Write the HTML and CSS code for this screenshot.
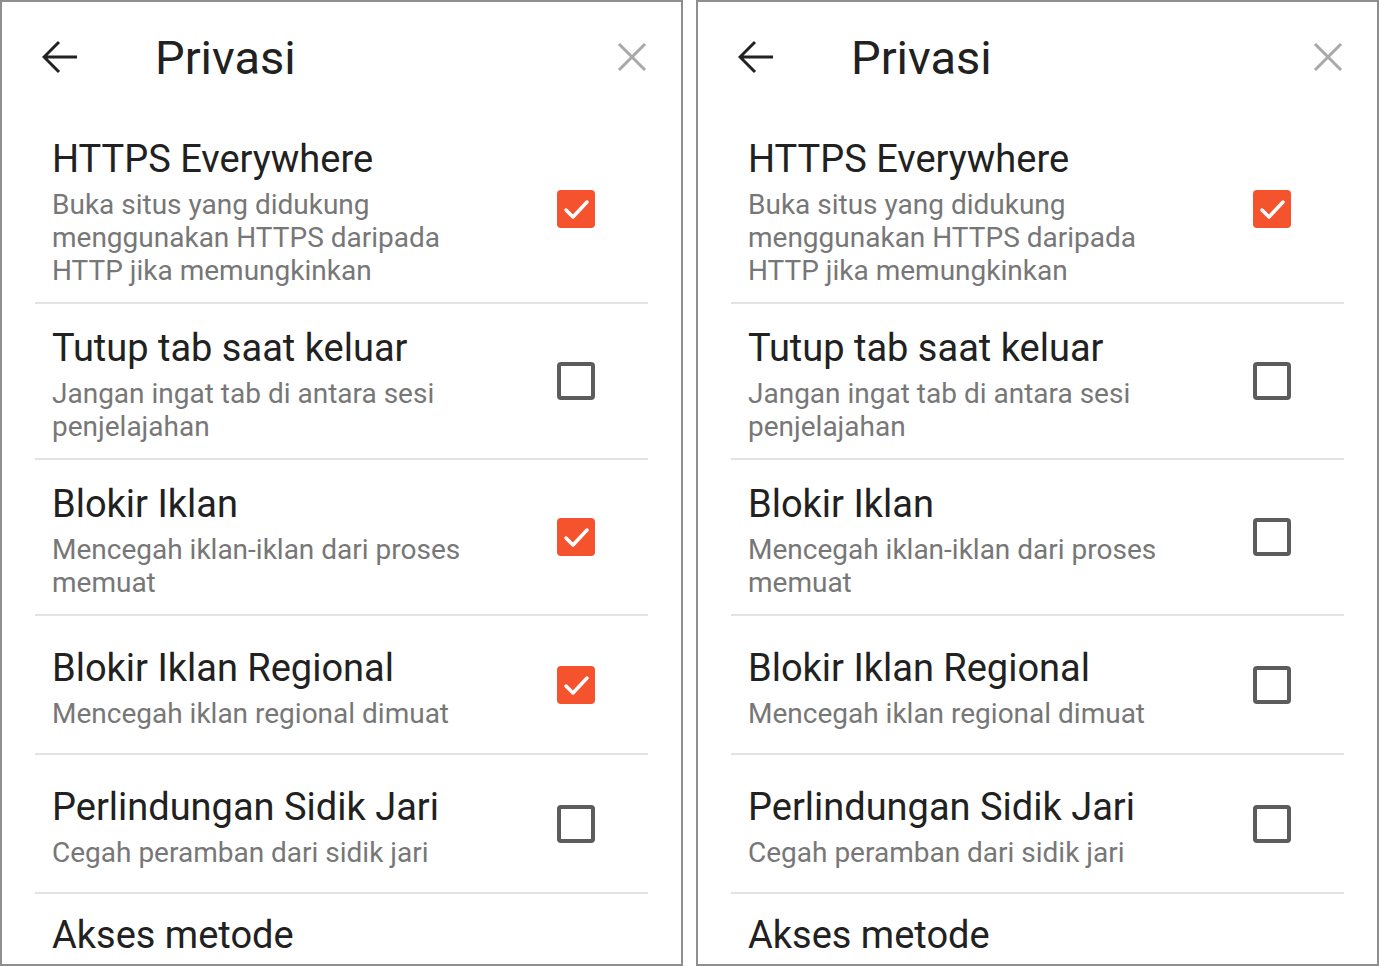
FILE: index.html
```html
<!DOCTYPE html>
<html lang="id">
<head>
    <meta charset="UTF-8">
    <meta name="viewport" content="width=device-width, initial-scale=1.0">
    <title>Privasi</title>
    <link rel="stylesheet" href="styles.css">
</head>
<body>
    <div class="screens">
        <!-- Sebelum: iklan diblokir -->
        <div class="panel">
            <div class="header">
                <svg class="back-icon" viewBox="0 0 36 36"><path d="M2 18H35M17 3L2 18L17 33"/></svg>
                <h1>Privasi</h1>
                <svg class="close-icon" viewBox="0 0 32 32"><path d="M3 3L29 29M29 3L3 29"/></svg>
            </div>
            <div class="settings">
                <div class="setting">
                    <div class="setting-text">
                        <div class="setting-title">HTTPS Everywhere</div>
                        <div class="setting-desc">Buka situs yang didukung menggunakan HTTPS daripada HTTP jika memungkinkan</div>
                    </div>
                    <span class="checkbox checked"><svg viewBox="0 0 38 38"><path d="M9 20L16 27L30 12"/></svg></span>
                </div>
                <div class="setting">
                    <div class="setting-text">
                        <div class="setting-title">Tutup tab saat keluar</div>
                        <div class="setting-desc">Jangan ingat tab di antara sesi penjelajahan</div>
                    </div>
                    <span class="checkbox"></span>
                </div>
                <div class="setting">
                    <div class="setting-text">
                        <div class="setting-title">Blokir Iklan</div>
                        <div class="setting-desc">Mencegah iklan-iklan dari proses memuat</div>
                    </div>
                    <span class="checkbox checked"><svg viewBox="0 0 38 38"><path d="M9 20L16 27L30 12"/></svg></span>
                </div>
                <div class="setting">
                    <div class="setting-text">
                        <div class="setting-title">Blokir Iklan Regional</div>
                        <div class="setting-desc">Mencegah iklan regional dimuat</div>
                    </div>
                    <span class="checkbox checked"><svg viewBox="0 0 38 38"><path d="M9 20L16 27L30 12"/></svg></span>
                </div>
                <div class="setting">
                    <div class="setting-text">
                        <div class="setting-title">Perlindungan Sidik Jari</div>
                        <div class="setting-desc">Cegah peramban dari sidik jari</div>
                    </div>
                    <span class="checkbox"></span>
                </div>
                <div class="setting setting-cut">
                    <div class="setting-text">
                        <div class="setting-title">Akses metode</div>
                    </div>
                </div>
            </div>
        </div>

        <!-- Sesudah: iklan tidak diblokir -->
        <div class="panel">
            <div class="header">
                <svg class="back-icon" viewBox="0 0 36 36"><path d="M2 18H35M17 3L2 18L17 33"/></svg>
                <h1>Privasi</h1>
                <svg class="close-icon" viewBox="0 0 32 32"><path d="M3 3L29 29M29 3L3 29"/></svg>
            </div>
            <div class="settings">
                <div class="setting">
                    <div class="setting-text">
                        <div class="setting-title">HTTPS Everywhere</div>
                        <div class="setting-desc">Buka situs yang didukung menggunakan HTTPS daripada HTTP jika memungkinkan</div>
                    </div>
                    <span class="checkbox checked"><svg viewBox="0 0 38 38"><path d="M9 20L16 27L30 12"/></svg></span>
                </div>
                <div class="setting">
                    <div class="setting-text">
                        <div class="setting-title">Tutup tab saat keluar</div>
                        <div class="setting-desc">Jangan ingat tab di antara sesi penjelajahan</div>
                    </div>
                    <span class="checkbox"></span>
                </div>
                <div class="setting">
                    <div class="setting-text">
                        <div class="setting-title">Blokir Iklan</div>
                        <div class="setting-desc">Mencegah iklan-iklan dari proses memuat</div>
                    </div>
                    <span class="checkbox"></span>
                </div>
                <div class="setting">
                    <div class="setting-text">
                        <div class="setting-title">Blokir Iklan Regional</div>
                        <div class="setting-desc">Mencegah iklan regional dimuat</div>
                    </div>
                    <span class="checkbox"></span>
                </div>
                <div class="setting">
                    <div class="setting-text">
                        <div class="setting-title">Perlindungan Sidik Jari</div>
                        <div class="setting-desc">Cegah peramban dari sidik jari</div>
                    </div>
                    <span class="checkbox"></span>
                </div>
                <div class="setting setting-cut">
                    <div class="setting-text">
                        <div class="setting-title">Akses metode</div>
                    </div>
                </div>
            </div>
        </div>
    </div>
</body>
</html>
```

FILE: styles.css
```css
* {
    box-sizing: border-box;
}
body {
    margin: 0;
    font-family: Roboto, "Liberation Sans", sans-serif;
    background-color: white;
}
.screens {
    display: flex;
    gap: 13px;
    width: 1379px;
    height: 966px;
}
.panel {
    width: 683px;
    height: 966px;
    border: 2px solid #8e8e8e;
    overflow: hidden;
    background-color: white;
}
.header {
    display: flex;
    align-items: center;
    height: 110px;
    padding: 0 33px 0 40px;
}
.back-icon {
    width: 36px;
    height: 36px;
    fill: none;
    stroke: #222;
    stroke-width: 3;
}
.header h1 {
    margin: 0 0 0 77px;
    font-size: 47px;
    font-weight: normal;
    color: #212121;
}
.close-icon {
    width: 32px;
    height: 32px;
    margin-left: auto;
    fill: none;
    stroke: #a8a8a8;
    stroke-width: 3;
}
.settings {
    margin: 0 33px;
    padding-top: 3px;
}
.setting {
    display: flex;
    align-items: center;
    min-height: 139px;
    padding: 21px 0 15px 17px;
    border-bottom: 2px solid #e3e3e3;
}
.setting-cut {
    align-items: flex-start;
    padding-top: 18px;
}
.setting-text {
    flex: 1;
    margin-right: 65px;
}
.setting-title {
    font-size: 38px;
    line-height: 46px;
    color: #212121;
}
.setting-desc {
    margin-top: 6px;
    font-size: 28px;
    line-height: 33px;
    color: #777;
}
.checkbox {
    flex: none;
    width: 38px;
    height: 38px;
    margin: 0 53px 6px 0;
    border: 4px solid #5c5c5c;
    border-radius: 4px;
}
.checkbox.checked {
    border: none;
    background-color: #f4532e;
}
.checkbox svg {
    display: block;
    width: 38px;
    height: 38px;
    fill: none;
    stroke: white;
    stroke-width: 3.5;
    stroke-linecap: round;
    stroke-linejoin: round;
}
```
